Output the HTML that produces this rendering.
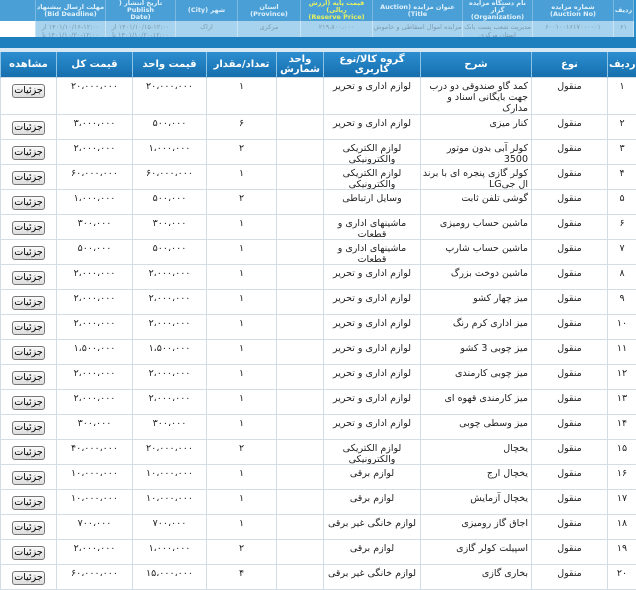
<!DOCTYPE html>
<html><head><meta charset="utf-8"><style>
*{margin:0;padding:0;box-sizing:border-box}
body{width:636px;height:590px;overflow:hidden;background:#fff;font-family:"DejaVu Sans","Liberation Sans",sans-serif;position:relative}
.top{position:absolute;left:0;top:0;width:636px;height:50px;background:#2f8fca;overflow:hidden}
.top table{border-collapse:collapse;width:634px;position:absolute;left:0;top:0;direction:rtl;font-size:6.5px;table-layout:fixed}
.top th{background:#4aa0d6;color:#dff0fb;height:17px;font-weight:bold;border-right:1px solid #7ab8e0;line-height:7px;overflow:hidden}
.top td{background:#a8d3ee;color:#7a9bb0;height:20px;vertical-align:top;border-right:1px solid #c8e4f4;text-align:center;line-height:8px;padding-top:2px;overflow:hidden;white-space:nowrap}
.bar{position:absolute;left:0;top:37px;width:636px;height:11px;background:#1e7fbf}
.sep{position:absolute;left:0;top:48px;width:636px;height:4px;background:#d7e8f4}
.main{position:absolute;left:0;top:52px;border-collapse:collapse;width:636px;direction:rtl;table-layout:fixed;font-size:9.5px;color:#222}
.main th{background:linear-gradient(#2c8ed0,#166fae);color:#fff;font-weight:bold;border-left:1px solid #8cc4e8;font-size:10px;line-height:10px;vertical-align:middle;padding:0}
.main th div{height:25px;overflow:hidden;display:flex;align-items:center;justify-content:center;text-align:center}
.main td{border:1px solid #d3dde6;vertical-align:top;text-align:center;padding:0}
.main td div{height:24px;overflow:hidden;line-height:11px;padding-top:3px}
.main tr.r1 td div{height:36px}
.main td.d div{text-align:right;padding-right:3px}
.b{display:inline-block;border:1px solid #777;border-radius:3px;background:linear-gradient(#fafafa,#ddd);font-size:9.5px;padding:0 1px;line-height:12px;margin-top:3px;color:#000}
</style></head><body>
<div class="top">
<table><colgroup><col style="width:20px"><col style="width:81px"><col style="width:70px"><col style="width:90px"><col style="width:72px"><col style="width:63px"><col style="width:62px"><col style="width:70px"><col style="width:70px"><col></colgroup>
<tr><th>ردیف</th><th>شماره مزایده<br>(Auction No)</th><th>نام دستگاه مزایده گزار<br>(Organization)</th><th>عنوان مزایده (Auction Title)</th><th style="color:#e8f060">قیمت پایه (ارزش ریالی)<br>(Reserve Price)</th><th>استان<br>(Province)</th><th>شهر (City)</th><th>تاریخ انتشار ( Publish<br>(Date</th><th>مهلت ارسال پیشنهاد<br>(Bid Deadline)</th><th></th></tr>
<tr><td>۶۱</td><td>۶۰۰۱۰۰۱۶۱۷۰۰۰۰۰۱</td><td>مدیریت شعب پست بانک<br>استان مرکزی</td><td>مزایده اموال اسقاطی و خاموش</td><td>۲۱۹،۸۰۰،۰۰۰</td><td>مرکزی</td><td>اراک</td><td>۱۴۰۱/۱۰/۱۵-۱۲:۰۰ از<br>۱۴۰۱/۱۰/۲۰-۱۲:۰۰ تا</td><td>۱۴۰۱/۱۰/۱۶-۱۲:۰۰ از<br>۱۴۰۱/۱۰/۲۰-۱۲:۰۰ تا</td><td style="background:#fff"></td></tr></table>
</div>
<div class="bar"></div><div class="sep"></div>
<table class="main">
<colgroup><col style="width:29px"><col style="width:76px"><col style="width:111px"><col style="width:97px"><col style="width:47px"><col style="width:70px"><col style="width:74px"><col style="width:76px"><col style="width:56px"></colgroup>
<tr><th><div>ردیف</div></th><th><div>نوع</div></th><th><div>شرح</div></th><th><div>گروه کالا/نوع<br>کاربری</div></th><th><div>واحد<br>شمارش</div></th><th><div>تعداد/مقدار</div></th><th><div>قیمت واحد</div></th><th><div>قیمت کل</div></th><th><div>مشاهده</div></th></tr>
<tr class="r1"><td><div>۱</div></td><td><div>منقول</div></td><td class="d"><div>کمد گاو صندوقی دو درب جهت بایگانی اسناد و مدارک</div></td><td><div>لوازم اداری و تحریر</div></td><td><div></div></td><td><div>۱</div></td><td><div>۲۰،۰۰۰،۰۰۰</div></td><td><div>۲۰،۰۰۰،۰۰۰</div></td><td><div><span class="b">جزئیات</span></div></td></tr>
<tr><td><div>۲</div></td><td><div>منقول</div></td><td class="d"><div>کنار میزی</div></td><td><div>لوازم اداری و تحریر</div></td><td><div></div></td><td><div>۶</div></td><td><div>۵۰۰،۰۰۰</div></td><td><div>۳،۰۰۰،۰۰۰</div></td><td><div><span class="b">جزئیات</span></div></td></tr>
<tr><td><div>۳</div></td><td><div>منقول</div></td><td class="d"><div>کولر آبی بدون موتور 3500</div></td><td><div>لوازم الکتریکی والکترونیکی</div></td><td><div></div></td><td><div>۲</div></td><td><div>۱،۰۰۰،۰۰۰</div></td><td><div>۲،۰۰۰،۰۰۰</div></td><td><div><span class="b">جزئیات</span></div></td></tr>
<tr><td><div>۴</div></td><td><div>منقول</div></td><td class="d"><div>کولر گازی پنجره ای با برند ال جیLG</div></td><td><div>لوازم الکتریکی والکترونیکی</div></td><td><div></div></td><td><div>۱</div></td><td><div>۶۰،۰۰۰،۰۰۰</div></td><td><div>۶۰،۰۰۰،۰۰۰</div></td><td><div><span class="b">جزئیات</span></div></td></tr>
<tr><td><div>۵</div></td><td><div>منقول</div></td><td class="d"><div>گوشی تلفن ثابت</div></td><td><div>وسایل ارتباطی</div></td><td><div></div></td><td><div>۲</div></td><td><div>۵۰۰،۰۰۰</div></td><td><div>۱،۰۰۰،۰۰۰</div></td><td><div><span class="b">جزئیات</span></div></td></tr>
<tr><td><div>۶</div></td><td><div>منقول</div></td><td class="d"><div>ماشین حساب رومیزی</div></td><td><div>ماشینهای اداری و قطعات</div></td><td><div></div></td><td><div>۱</div></td><td><div>۳۰۰،۰۰۰</div></td><td><div>۳۰۰،۰۰۰</div></td><td><div><span class="b">جزئیات</span></div></td></tr>
<tr><td><div>۷</div></td><td><div>منقول</div></td><td class="d"><div>ماشین حساب شارپ</div></td><td><div>ماشینهای اداری و قطعات</div></td><td><div></div></td><td><div>۱</div></td><td><div>۵۰۰،۰۰۰</div></td><td><div>۵۰۰،۰۰۰</div></td><td><div><span class="b">جزئیات</span></div></td></tr>
<tr><td><div>۸</div></td><td><div>منقول</div></td><td class="d"><div>ماشین دوخت بزرگ</div></td><td><div>لوازم اداری و تحریر</div></td><td><div></div></td><td><div>۱</div></td><td><div>۲،۰۰۰،۰۰۰</div></td><td><div>۲،۰۰۰،۰۰۰</div></td><td><div><span class="b">جزئیات</span></div></td></tr>
<tr><td><div>۹</div></td><td><div>منقول</div></td><td class="d"><div>میز چهار کشو</div></td><td><div>لوازم اداری و تحریر</div></td><td><div></div></td><td><div>۱</div></td><td><div>۲،۰۰۰،۰۰۰</div></td><td><div>۲،۰۰۰،۰۰۰</div></td><td><div><span class="b">جزئیات</span></div></td></tr>
<tr><td><div>۱۰</div></td><td><div>منقول</div></td><td class="d"><div>میز اداری کرم رنگ</div></td><td><div>لوازم اداری و تحریر</div></td><td><div></div></td><td><div>۱</div></td><td><div>۲،۰۰۰،۰۰۰</div></td><td><div>۲،۰۰۰،۰۰۰</div></td><td><div><span class="b">جزئیات</span></div></td></tr>
<tr><td><div>۱۱</div></td><td><div>منقول</div></td><td class="d"><div>میز چوبی 3 کشو</div></td><td><div>لوازم اداری و تحریر</div></td><td><div></div></td><td><div>۱</div></td><td><div>۱،۵۰۰،۰۰۰</div></td><td><div>۱،۵۰۰،۰۰۰</div></td><td><div><span class="b">جزئیات</span></div></td></tr>
<tr><td><div>۱۲</div></td><td><div>منقول</div></td><td class="d"><div>میز چوبی کارمندی</div></td><td><div>لوازم اداری و تحریر</div></td><td><div></div></td><td><div>۱</div></td><td><div>۲،۰۰۰،۰۰۰</div></td><td><div>۲،۰۰۰،۰۰۰</div></td><td><div><span class="b">جزئیات</span></div></td></tr>
<tr><td><div>۱۳</div></td><td><div>منقول</div></td><td class="d"><div>میز کارمندی قهوه ای</div></td><td><div>لوازم اداری و تحریر</div></td><td><div></div></td><td><div>۱</div></td><td><div>۲،۰۰۰،۰۰۰</div></td><td><div>۲،۰۰۰،۰۰۰</div></td><td><div><span class="b">جزئیات</span></div></td></tr>
<tr><td><div>۱۴</div></td><td><div>منقول</div></td><td class="d"><div>میز وسطی چوبی</div></td><td><div>لوازم اداری و تحریر</div></td><td><div></div></td><td><div>۱</div></td><td><div>۳۰۰،۰۰۰</div></td><td><div>۳۰۰،۰۰۰</div></td><td><div><span class="b">جزئیات</span></div></td></tr>
<tr><td><div>۱۵</div></td><td><div>منقول</div></td><td class="d"><div>یخچال</div></td><td><div>لوازم الکتریکی والکترونیکی</div></td><td><div></div></td><td><div>۲</div></td><td><div>۲۰،۰۰۰،۰۰۰</div></td><td><div>۴۰،۰۰۰،۰۰۰</div></td><td><div><span class="b">جزئیات</span></div></td></tr>
<tr><td><div>۱۶</div></td><td><div>منقول</div></td><td class="d"><div>یخچال ارج</div></td><td><div>لوازم برقی</div></td><td><div></div></td><td><div>۱</div></td><td><div>۱۰،۰۰۰،۰۰۰</div></td><td><div>۱۰،۰۰۰،۰۰۰</div></td><td><div><span class="b">جزئیات</span></div></td></tr>
<tr><td><div>۱۷</div></td><td><div>منقول</div></td><td class="d"><div>یخچال آزمایش</div></td><td><div>لوازم برقی</div></td><td><div></div></td><td><div>۱</div></td><td><div>۱۰،۰۰۰،۰۰۰</div></td><td><div>۱۰،۰۰۰،۰۰۰</div></td><td><div><span class="b">جزئیات</span></div></td></tr>
<tr><td><div>۱۸</div></td><td><div>منقول</div></td><td class="d"><div>اجاق گاز رومیزی</div></td><td><div>لوازم خانگی غیر برقی</div></td><td><div></div></td><td><div>۱</div></td><td><div>۷۰۰،۰۰۰</div></td><td><div>۷۰۰،۰۰۰</div></td><td><div><span class="b">جزئیات</span></div></td></tr>
<tr><td><div>۱۹</div></td><td><div>منقول</div></td><td class="d"><div>اسپیلت کولر گازی</div></td><td><div>لوازم برقی</div></td><td><div></div></td><td><div>۲</div></td><td><div>۱،۰۰۰،۰۰۰</div></td><td><div>۲،۰۰۰،۰۰۰</div></td><td><div><span class="b">جزئیات</span></div></td></tr>
<tr><td><div>۲۰</div></td><td><div>منقول</div></td><td class="d"><div>بخاری گازی</div></td><td><div>لوازم خانگی غیر برقی</div></td><td><div></div></td><td><div>۴</div></td><td><div>۱۵،۰۰۰،۰۰۰</div></td><td><div>۶۰،۰۰۰،۰۰۰</div></td><td><div><span class="b">جزئیات</span></div></td></tr>
</table>
</body></html>
